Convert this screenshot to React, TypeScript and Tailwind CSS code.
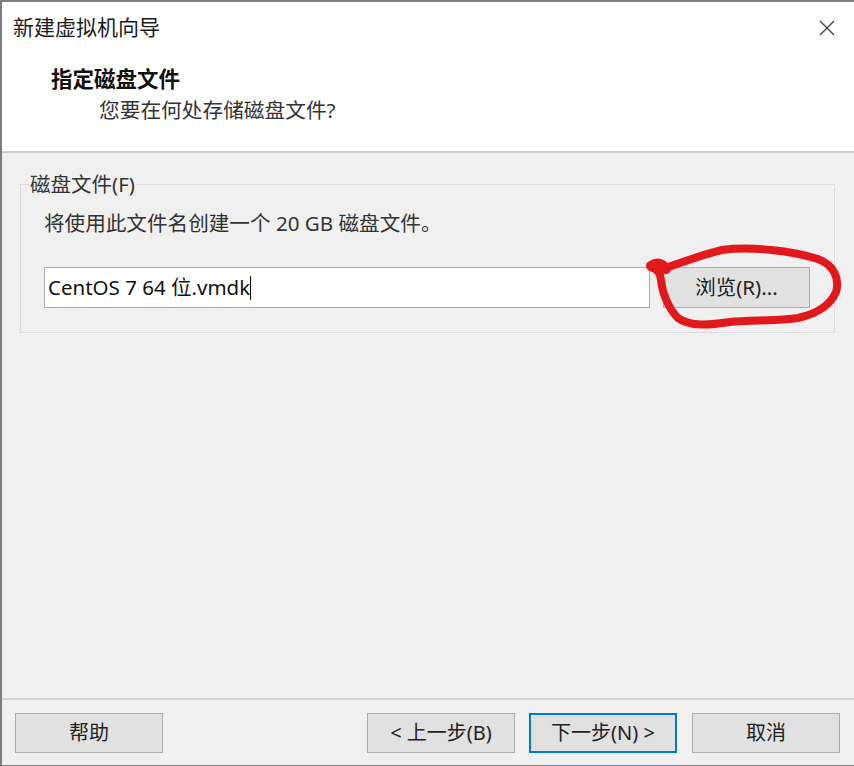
import React from "react";

const font = { fontFamily: '"Noto Sans", "Noto Sans CJK SC", sans-serif' };

function Btn({ children, primary }: { children: React.ReactNode; primary?: boolean }) {
  return (
    <div
      className={
        "w-[148px] h-[40px] flex items-center justify-center bg-[#e1e1e1] text-[20px] text-[#222] leading-none " +
        (primary ? "border-2 border-[#0078d7]" : "border border-[#adadad]")
      }
    >
      {children}
    </div>
  );
}

export default function App() {
  return (
    <div
      className="relative w-[854px] h-[766px] flex flex-col border-t-2 border-l-2 border-b border-[#7d7d7d] bg-[#f0f0f0] overflow-hidden"
      style={font}
    >
      {/* Header */}
      <div className="relative h-[151px] bg-white border-b-2 border-[#cfcfcf] shrink-0">
        <div className="pl-[11px] mt-[10px] h-[30px] leading-[30px] text-[21px] text-[#1a1a1a]">新建虚拟机向导</div>
        <div className="absolute right-[18px] top-[17px] w-[18px] h-[18px]">
          <svg width="18" height="18" viewBox="0 0 18 18">
            <path d="M2 2 L16 16 M16 2 L2 16" stroke="#444" strokeWidth="1.4" fill="none" />
          </svg>
        </div>
        <div className="pl-[49px] mt-[22px] h-[30px] leading-[30px] text-[21.5px] font-bold text-[#111]">指定磁盘文件</div>
        <div className="pl-[97px] mt-[1px] h-[30px] leading-[30px] text-[20.7px] text-[#333]">您要在何处存储磁盘文件?</div>
      </div>

      {/* Body */}
      <div className="flex-1 flex flex-col">
        <fieldset className="ml-[18px] mr-[19px] mt-[17px] border border-[#dcdcdc]">
          <legend className="ml-[8px] px-[1px] h-[28px] leading-[28px] text-[20.5px] text-[#333]">磁盘文件(F)</legend>
          <div className="pl-[23px] pr-[24px] pb-[24px]">
            <div className="mt-[10px] h-[30px] leading-[30px] text-[20.6px] text-[#333]">将使用此文件名创建一个 20 GB 磁盘文件。</div>
            <div className="mt-[29px] flex gap-[13px]">
              <div className="w-[606px] h-[41px] bg-white border border-[#adadad] flex items-center pl-[3px] text-[20.5px] text-[#111]">
                <span>CentOS 7 64 位.vmdk</span>
                <span className="inline-block w-[1px] h-[24px] bg-black" />
              </div>
              <div className="w-[147px] h-[41px] bg-[#e1e1e1] border border-[#adadad] flex items-center justify-center text-[20.5px] text-[#222]">
                浏览(R)...
              </div>
            </div>
          </div>
        </fieldset>
      </div>

      {/* Footer */}
      <div className="shrink-0 border-t-2 border-[#d2d2d2] pt-[13px] pb-[12px] pl-[13px] pr-[14px] flex items-center">
        <Btn>帮助</Btn>
        <div className="flex-1" />
        <div className="flex gap-[14px]">
          <Btn>&lt; 上一步(B)</Btn>
          <Btn primary>下一步(N) &gt;</Btn>
          <div className="ml-[1px]">
            <Btn>取消</Btn>
          </div>
        </div>
      </div>

      {/* Red annotation */}
      <svg
        className="absolute left-[-2px] top-[-2px] pointer-events-none"
        width="854"
        height="766"
        viewBox="0 0 854 766"
      >
        <path
          d="M660 270 C 685 261, 705 254, 722 250 C 752 246, 792 251, 818 259 C 834 265, 840 279, 836 292 C 831 304, 820 313, 798 318 C 778 321, 750 320, 730 322 C 710 325, 690 327, 678 318 C 668 308, 662 292, 661 280 C 660 272, 657 269, 653 268"
          stroke="#e2191c"
          strokeWidth="8"
          fill="none"
          strokeLinecap="round"
          strokeLinejoin="round"
        />
        <path d="M651 266 Q 660 260 666 269" stroke="#e2191c" strokeWidth="10" fill="none" strokeLinecap="round" />
      </svg>
    </div>
  );
}
